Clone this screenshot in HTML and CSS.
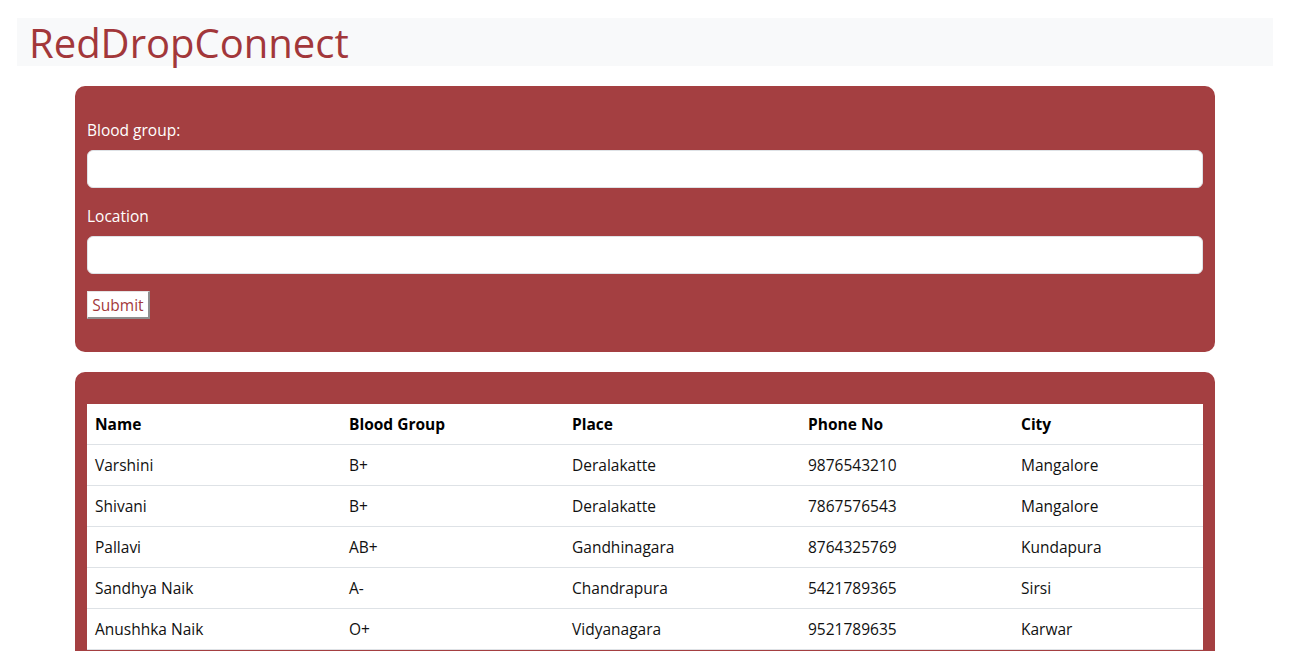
FILE: index.html
```html
<!DOCTYPE html>
<html lang="en">
<head>
<meta charset="utf-8">
<title>RedDropConnect</title>
<link rel="stylesheet" href="styles.css">
</head>
<body>
<header class="topbar">
  <h1 class="brand">RedDropConnect</h1>
</header>
<main class="container">
  <form class="card search-card">
    <div class="field">
      <label class="field-label" for="bg">Blood group:</label>
      <input class="field-input" id="bg" type="text">
    </div>
    <div class="field">
      <label class="field-label" for="loc">Location</label>
      <input class="field-input" id="loc" type="text">
    </div>
    <button class="submit-btn" type="button">Submit</button>
  </form>
  <section class="card results-card">
    <table class="donor-table">
      <colgroup>
        <col class="c-name"><col class="c-group"><col class="c-place"><col class="c-phone"><col class="c-city">
      </colgroup>
      <thead>
        <tr><th>Name</th><th>Blood Group</th><th>Place</th><th>Phone No</th><th>City</th></tr>
      </thead>
      <tbody>
        <tr><td>Varshini</td><td>B+</td><td>Deralakatte</td><td>9876543210</td><td>Mangalore</td></tr>
        <tr><td>Shivani</td><td>B+</td><td>Deralakatte</td><td>7867576543</td><td>Mangalore</td></tr>
        <tr><td>Pallavi</td><td>AB+</td><td>Gandhinagara</td><td>8764325769</td><td>Kundapura</td></tr>
        <tr><td>Sandhya Naik</td><td>A-</td><td>Chandrapura</td><td>5421789365</td><td>Sirsi</td></tr>
        <tr><td>Anushhka Naik</td><td>O+</td><td>Vidyanagara</td><td>9521789635</td><td>Karwar</td></tr>
      </tbody>
    </table>
  </section>
</main>
</body>
</html>
```

FILE: styles.css
```css
* { box-sizing: border-box; }

html, body {
  margin: 0;
  padding: 0;
  background: #ffffff;
}

body {
  font-family: "Open Sans", "Noto Sans", sans-serif;
  font-size: 16px;
  line-height: 24px;
  color: #212529;
}

.topbar {
  margin: 18px 19px 0 17px;
  height: 48px;
  background: #f8f9fa;
  padding-left: 12px;
}

.brand {
  margin: 0;
  font-family: "Open Sans", "Noto Sans", sans-serif;
  font-weight: 500;
  font-size: 40px;
  line-height: 50px;
  color: #a2373a;
  letter-spacing: 0;
}

.container {
  width: 1140px;
  margin: 20px auto 0 75px;
  display: flex;
  flex-direction: column;
  gap: 20px;
}

.card {
  background: #a43f41;
  border-radius: 10px;
  padding: 32px 12px 33px;
}

.field {
  margin-bottom: 16px;
}

.field:last-of-type {
  margin-bottom: 17px;
}

.field-label {
  display: block;
  color: #ffffff;
  margin-bottom: 8px;
  font-size: 15.5px;
}

.field-input {
  display: block;
  width: 100%;
  height: 38px;
  border: 1px solid #dee2e6;
  border-radius: 6px;
  background: #ffffff;
  font: inherit;
  padding: 6px 12px;
}

.submit-btn {
  display: block;
  width: 63px;
  height: 28px;
  padding: 0;
  text-align: center;
  background: #ffffff;
  color: #a3393b;
  font-family: "Open Sans", "Noto Sans", sans-serif;
  font-size: 15.5px;
  line-height: 24px;
  border-color: #e4e4e4 #8f8f8f #8f8f8f #e4e4e4;
  border-style: solid;
  border-width: 1px 2px 2px 1px;
}

.results-card {
  padding-bottom: 40px;
}

.donor-table {
  width: 100%;
  border-collapse: collapse;
  background: #ffffff;
  table-layout: fixed;
}

.c-name { width: 254px; }
.c-group { width: 223px; }
.c-place { width: 236px; }
.c-phone { width: 213px; }
.c-city { width: 190px; }

.donor-table th,
.donor-table td {
  text-align: left;
  padding: 8px;
  line-height: 24px;
  border-bottom: 1px solid #dee2e6;
  color: #111111;
  font-size: 15.5px;
  white-space: nowrap;
}

.donor-table th {
  font-weight: 700;
  color: #000000;
}
```
